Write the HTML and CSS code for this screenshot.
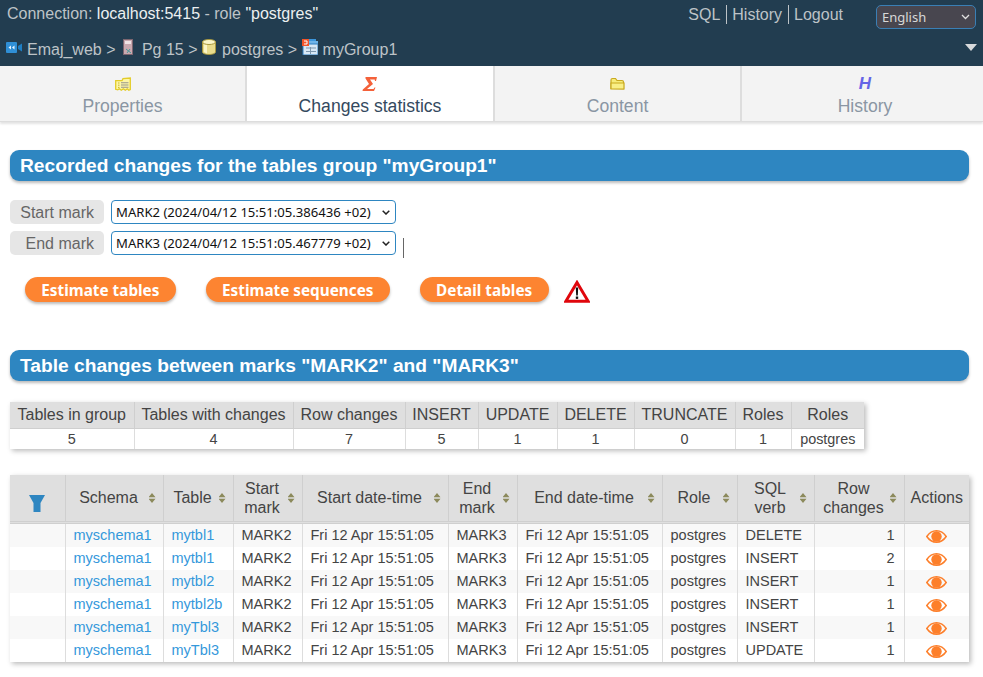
FILE: index.html
```html
<!DOCTYPE html>
<html lang="en">
<head>
  <meta charset="UTF-8" />
  <title>Emaj_web - Changes statistics</title>
  <link rel="stylesheet" href="styles.css">
</head>
<body>
  <header class="topbar">
    <div class="toprow">
      <div class="conn">Connection: <span class="connval">localhost:5415</span> - role <span class="connval">"postgres"</span></div>
      <nav class="toplinks">
        <a href="#">SQL</a>
        <a href="#">History</a>
        <a href="#">Logout</a>
      </nav>
      <select class="lang"><option>English</option></select>
    </div>
    <div class="crumbs">
      <svg class="ci ci-app" width="16" height="11" viewBox="0 0 16 11"><rect x="0" y="0" width="11" height="11" rx="1" fill="#2f8fd6"/><path d="M2.500 5.500 5 3.500v4zM8.500 3.500v4L6 5.500z" fill="#e8f4ff"/><path d="M12 4l4-2.500v8L12 7z" fill="#1f7fc4"/></svg><a href="#">Emaj_web</a> &gt; <svg class="ci ci-pg" width="12" height="16" viewBox="0 0 12 16"><rect x="1.500" y="0.500" width="9" height="15" fill="#c9a9b0" stroke="#7d6670"/><rect x="3" y="2" width="6" height="3" fill="#efe3e5"/><path d="M4 10l5 4M8 10l-3 4" stroke="#4a9a9a"/></svg><a href="#">Pg 15</a> &gt; <svg class="ci ci-db" width="14" height="16" viewBox="0 0 14 16"><path d="M0.500 3v10c0 1.500 3 2.500 6.500 2.500s6.500-1 6.500-2.500V3z" fill="#e9dc8c" stroke="#a8983f"/><path d="M2 5v8l3 1.500V6z" fill="#fbf6c8"/><ellipse cx="7" cy="3" rx="6.500" ry="2.500" fill="#fbf6c8" stroke="#a8983f"/></svg><a href="#">postgres</a> &gt; <svg class="ci ci-grp" width="16" height="16" viewBox="0 0 16 16"><rect x="5" y="0" width="9" height="5" fill="#3c96dc"/><rect x="3" y="2" width="13" height="5" fill="#6fb4e8"/><rect x="1" y="5" width="15" height="11" fill="#d8e8f5" stroke="#2f7fc0"/><path d="M4 9h10M4 12.500h10M8.500 8v7" stroke="#7d97ad"/><rect x="0" y="0" width="7" height="7" fill="#f0552a"/><path d="M2 2h3v3H2" fill="none" stroke="#fff"/></svg><a href="#">myGroup1</a>
      <span class="menucaret"></span>
    </div>
  </header>

  <nav class="tabs">
    <a class="tab" href="#">
      <svg width="16" height="14" viewBox="0 0 16 14"><path d="M.7 3.700h6.300l1-2 7.300-.7v11.500l-1.500.8-1.500-1.500-2 1.500-2-1.500-2 1.500-2-1.500-1.500 1-2.100-.5z" fill="#fdf6a8" stroke="#e3cc28" stroke-width="1.300"/><path d="M3 6h1.500M3 8.200h1.500M3 10.400h1.500" stroke="#c9b52a"/><path d="M6 5.800h7.500M6 8h7.500M6 10.200h7.500" stroke="#98958a" stroke-width="1.100"/></svg>
      <span>Properties</span>
    </a>
    <a class="tab active" href="#">
      <svg width="16" height="16" viewBox="0 0 16 16"><path d="M3.500 1h11.500l-1 4h-1l-.3-1.500H8l3 4.500-6 5h6.500l1-1.500h1l-1.500 3.500H0.500l0.300-1.500L7 8 3.500 2.500z" fill="#f4613a"/></svg>
      <span>Changes statistics</span>
    </a>
    <a class="tab" href="#">
      <svg width="15" height="13" viewBox="0 0 15 13"><path d="M1 11V2.500c0-1 .5-1.500 1.500-1.500h3l1.500 2h5c1 0 1.500.5 1.500 1.500v7z" fill="#f7ec7a" stroke="#c9a91f" stroke-width="1.200"/><path d="M1 11.500V5.500h13v6z" fill="#f9ef86" stroke="#c9a91f" stroke-width="1.200"/></svg>
      <span>Content</span>
    </a>
    <a class="tab" href="#">
      <b class="hicon">H</b>
      <span>History</span>
    </a>
  </nav>

  <main class="content">
    <h2 class="bar first">Recorded changes for the tables group "myGroup1"</h2>

    <form class="marks">
      <div class="markrow">
        <label class="marklabel">Start mark</label>
        <select class="marksel"><option>MARK2 (2024/04/12 15:51:05.386436 +02)</option></select>
      </div>
      <div class="markrow">
        <label class="marklabel">End mark</label>
        <select class="marksel"><option>MARK3 (2024/04/12 15:51:05.467779 +02)</option></select>
        <span class="cursor"></span>
      </div>
      <div class="actions">
        <button type="button" class="btn">Estimate tables</button>
        <button type="button" class="btn">Estimate sequences</button>
        <button type="button" class="btn">Detail tables</button>
        <svg class="warn" width="26" height="23" viewBox="0 0 26 23"><path d="M13 2.500 24.200 21.300H1.800z" fill="#fff" stroke="#e0060c" stroke-width="3"/><path d="M11.800 7.500h2.400l-.4 8h-1.600z" fill="#111"/><rect x="11.800" y="16.500" width="2.400" height="2.400" fill="#111"/></svg>
      </div>
    </form>

    <h2 class="bar second">Table changes between marks "MARK2" and "MARK3"</h2>

    <table class="grid summary">
      <colgroup>
        <col class="s1"><col class="s2"><col class="s3"><col class="s4"><col class="s5">
        <col class="s6"><col class="s7"><col class="s8"><col class="s9">
      </colgroup>
      <tr>
        <th>Tables in group</th><th>Tables with changes</th><th>Row changes</th><th>INSERT</th><th>UPDATE</th>
        <th>DELETE</th><th>TRUNCATE</th><th>Roles</th><th>Roles</th>
      </tr>
      <tr>
        <td>5</td><td>4</td><td>7</td><td>5</td><td>1</td><td>1</td><td>0</td><td>1</td><td>postgres</td>
      </tr>
    </table>

    <table class="grid detail">
      <colgroup>
        <col class="d1"><col class="d2"><col class="d3"><col class="d4"><col class="d5"><col class="d6">
        <col class="d7"><col class="d8"><col class="d9"><col class="d10"><col class="d11">
      </colgroup>
      <thead>
        <tr>
          <th class="filtercell"><svg width="16" height="17" viewBox="0 0 16 17"><path d="M0 0h16L11.500 8v9h-7V8z" fill="#2e86c1"/></svg></th>
          <th><div class="thin"><span class="single">Schema</span><i class="sort"></i></div></th>
          <th><div class="thin"><span class="single">Table</span><i class="sort"></i></div></th>
          <th><div class="thin"><span>Start<br>mark</span><i class="sort"></i></div></th>
          <th><div class="thin"><span class="single">Start date-time</span><i class="sort"></i></div></th>
          <th><div class="thin"><span>End<br>mark</span><i class="sort"></i></div></th>
          <th><div class="thin"><span class="single">End date-time</span><i class="sort"></i></div></th>
          <th><div class="thin"><span class="single">Role</span><i class="sort"></i></div></th>
          <th><div class="thin"><span>SQL<br>verb</span><i class="sort"></i></div></th>
          <th><div class="thin"><span>Row<br>changes</span><i class="sort"></i></div></th>
          <th><span class="single">Actions</span></th>
        </tr>
      </thead>
      <tbody id="rows"></tbody>
    </table>
  </main>

  <script>
    const rows = [
      ['mytbl1', 'DELETE', 1],
      ['mytbl1', 'INSERT', 2],
      ['mytbl2', 'INSERT', 1],
      ['mytbl2b', 'INSERT', 1],
      ['myTbl3', 'INSERT', 1],
      ['myTbl3', 'UPDATE', 1]
    ];
    const eye = '<svg width="21" height="13" viewBox="0 0 21 13"><path d="M0.800 6.500C3.500 2.500 6.800 .8 10.500 .8s7 1.700 9.700 5.700c-2.700 4-6 5.700-9.700 5.700S3.500 10.500 .8 6.500z" fill="none" stroke="#fd7f2a" stroke-width="1.500"/><circle cx="10.500" cy="6.500" r="5.200" fill="#fd7f2a"/></svg>';
    document.getElementById('rows').innerHTML = rows.map(r => `
      <tr>
        <td></td>
        <td><a href="#">myschema1</a></td>
        <td><a href="#">${r[0]}</a></td>
        <td>MARK2</td>
        <td>Fri 12 Apr 15:51:05</td>
        <td>MARK3</td>
        <td>Fri 12 Apr 15:51:05</td>
        <td>postgres</td>
        <td>${r[1]}</td>
        <td class="num">${r[2]}</td>
        <td class="act">${eye}</td>
      </tr>`).join('');
  </script>
</body>
</html>
```

FILE: styles.css
```css
body {
  margin: 0;
  font-family: "Liberation Sans", Arial, sans-serif;
  font-size: 16px;
  color: #444;
  background: #fff;
}

a {
  text-decoration: none;
}

/* top bar */
.topbar {
  height: 66px;
  box-sizing: border-box;
  background: #223d50;
  color: #bdc3c7;
}
.toprow {
  display: flex;
  align-items: flex-start;
  height: 35px;
  padding-left: 7px;
}
.conn {
  padding-top: 5px;
  line-height: 18px;
}
.connval {
  color: #ecf0f1;
}
.toplinks {
  display: flex;
  margin-left: auto;
  margin-top: 5px;
}
.toplinks a {
  color: #bdc3c7;
  line-height: 19px;
  padding: 0 6px 0 5px;
  border-left: 1px solid #bdc3c7;
}
.toplinks a:first-child {
  border-left: 0;
}
.lang {
  appearance: none;
  box-sizing: border-box;
  width: 100px;
  height: 24px;
  margin: 5px 7px 0 27px;
  padding: 0 20px 0 5px;
  background: #48464f url("data:image/svg+xml,%3Csvg xmlns='http://www.w3.org/2000/svg' width='9' height='6'%3E%3Cpath d='M1 1l3.500 3.500L8 1' fill='none' stroke='%23e0e0e0' stroke-width='1.300'/%3E%3C/svg%3E") no-repeat right 5px center;
  color: #d8d8d8;
  border: 1px solid #3a7fb5;
  border-radius: 5px;
  font-family: "Noto Sans", sans-serif;
  font-size: 13px;
}
.crumbs {
  height: 25px;
  padding: 6px 0 0 6px;
  position: relative;
  line-height: 18px;
}
.crumbs a {
  color: #bdc3c7;
}
.ci {
  vertical-align: top;
}
.ci-app {
  margin: 1px 5px 0 0;
}
.ci-pg {
  margin: -2px 8px 0 2px;
}
.ci-db {
  margin: -2px 6px 0 0;
}
.ci-grp {
  margin: -2px 5px 0 0;
}
.menucaret {
  position: absolute;
  right: 6px;
  top: 9px;
  width: 0;
  height: 0;
  border-left: 6px solid transparent;
  border-right: 6px solid transparent;
  border-top: 7px solid #d8dadc;
}

/* tabs */
.tabs {
  display: grid;
  grid-template-columns: 247px 248px 247px 248px;
  height: 56px;
  box-sizing: border-box;
  overflow: hidden;
  background: #f3f3f3;
  border-bottom: 1px solid #ddd;
  box-shadow: 0 2px 2px #e4e4e4;
}
.tab {
  display: flex;
  flex-direction: column;
  align-items: center;
  height: 55px;
  box-sizing: border-box;
  padding-top: 10px;
  color: #8a96a3;
  font-size: 17.600px;
  border-right: 2px solid #ddd;
}
.tab svg,
.hicon {
  height: 16px;
  display: block;
}
.tab span {
  margin-top: 4px;
  line-height: 21px;
}
.tab.active {
  background: #fff;
  color: #34495e;
}
.hicon {
  color: #6464e6;
  font-style: italic;
  font-size: 17px;
  line-height: 16px;
}

/* section bars */
.content {
  padding: 0 14px 14px 10px;
}
.bar {
  margin: 0;
  height: 31px;
  padding-left: 10px;
  background: #2e86c1;
  color: #fff;
  font-size: 19.200px;
  font-weight: bold;
  line-height: 31px;
  border-radius: 9px;
  box-shadow: 0 2px 3px #bbb;
}
.bar.first {
  margin-top: 28px;
}
.bar.second {
  margin-top: 48px;
}

/* marks form */
.marks {
  margin-top: 19px;
}
.markrow {
  display: flex;
  align-items: flex-start;
  height: 31px;
}
.marklabel {
  box-sizing: border-box;
  width: 94px;
  height: 24px;
  padding-right: 10px;
  background: #e6e6e6;
  border-radius: 5px;
  color: #666;
  line-height: 26px;
  text-align: right;
}
.marksel {
  appearance: none;
  box-sizing: border-box;
  width: 285px;
  height: 24px;
  margin-left: 7px;
  padding: 0 18px 0 4px;
  background: #fff url("data:image/svg+xml,%3Csvg xmlns='http://www.w3.org/2000/svg' width='8' height='5'%3E%3Cpath d='M.7 .7L4 4l3.300-3.300' fill='none' stroke='%23222' stroke-width='1.500'/%3E%3C/svg%3E") no-repeat right 5px center;
  color: #111;
  border: 1px solid #2e86c1;
  border-radius: 4px;
  font-family: "Noto Sans", sans-serif;
  font-size: 13.100px;
}
.cursor {
  width: 1px;
  height: 20px;
  margin: 7px 0 0 7px;
  background: #666;
}
.actions {
  display: flex;
  align-items: flex-start;
  gap: 30px;
  margin-top: 15px;
  padding-left: 15px;
}
.btn {
  height: 25px;
  padding: 0 16.300px;
  border: 0;
  border-radius: 13px;
  background: #fd8431;
  color: #fff;
  font-family: "Noto Sans", sans-serif;
  font-size: 15.300px;
  font-weight: bold;
  box-shadow: 0 2px 3px #bbb;
}
.warn {
  margin: 3px 0 -1px -15px;
}

/* tables */
.grid {
  table-layout: fixed;
  border-collapse: collapse;
  box-shadow: 2px 2px 5px #bbb;
}
.grid th {
  background: #dfdfdf;
  font-weight: normal;
  color: #444;
  border-left: 1px solid #cfcfcf;
  padding: 0;
}
.grid td {
  border-left: 1px solid #ddd;
  padding: 0;
}
.grid th:first-child,
.grid td:first-child {
  border-left: 0;
}
.summary {
  width: 854px;
  margin-top: 21px;
}
.summary th {
  height: 26px;
  border-bottom: 1px solid #cfcfcf;
}
.summary td {
  height: 20px;
  text-align: center;
  font-size: 14.400px;
}
.s1 { width: 124px; }
.s2 { width: 159px; }
.s3 { width: 112px; }
.s4 { width: 73px; }
.s5 { width: 79px; }
.s6 { width: 77px; }
.s7 { width: 101px; }
.s8 { width: 56px; }
.s9 { width: 73px; }

.detail {
  width: 959px;
  margin-top: 26px;
}
.detail th {
  height: 46px;
  line-height: 19px;
  border-bottom: 3px double #cfcfcf;
}
.detail td {
  height: 23px;
  padding-left: 8px;
  font-size: 14.500px;
  line-height: 17px;
}
.detail td a {
  color: #3498db;
}
.detail tbody tr:nth-child(odd) {
  background: #f8f8f8;
}
.detail td:first-child {
  padding: 0;
}
.detail td.num {
  text-align: right;
  padding: 0 9px 0 0;
}
.detail td.act {
  padding: 0;
}
.act svg {
  display: block;
  margin: 1px auto 0;
}
.filtercell svg {
  display: block;
  margin: 11px auto 0;
}
.thin {
  display: flex;
  align-items: center;
  gap: 3px;
  padding: 0 7px 0 6px;
}
.thin span {
  flex: 1;
}
.single {
  display: block;
  padding-bottom: 1px;
}
.sort {
  flex: none;
  width: 7px;
  height: 10px;
  background: #8c8a5c;
  clip-path: polygon(50% 0, 100% 42%, 0 42%, 50% 0, 50% 100%, 0 58%, 100% 58%, 50% 100%);
}
.d1 { width: 55px; }
.d2 { width: 98px; }
.d3 { width: 70px; }
.d4 { width: 69px; }
.d5 { width: 146px; }
.d6 { width: 69px; }
.d7 { width: 145px; }
.d8 { width: 75px; }
.d9 { width: 77px; }
.d10 { width: 90px; }
.d11 { width: 65px; }
```
